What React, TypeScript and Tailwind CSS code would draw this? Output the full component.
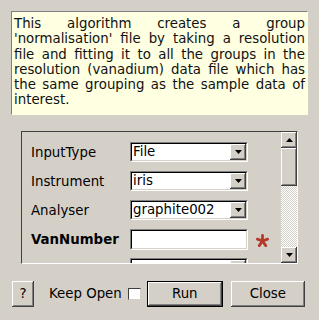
import React from 'react';

const raised =
  'bg-[#d4d0c8] shadow-[inset_-1px_-1px_#404040,inset_1px_1px_#ffffff,inset_-2px_-2px_#808080,inset_2px_2px_#d4d0c8]';

function Arrow({ up = false }: { up?: boolean }) {
  return (
    <svg width="7" height="4" viewBox="0 0 7 4" className="block">
      <polygon points={up ? '3.5,0 7,4 0,4' : '0,0 7,0 3.5,4'} fill="#000" />
    </svg>
  );
}

function Sunken({ children, className = '' }: { children?: React.ReactNode; className?: string }) {
  return (
    <div className={`border border-t-[#808080] border-l-[#808080] border-b-white border-r-white ${className}`}>
      <div className="h-full border border-t-black border-l-black border-b-[#d4d0c8] border-r-[#d4d0c8] bg-white flex items-center">
        {children}
      </div>
    </div>
  );
}

function Combo({ value }: { value: string }) {
  return (
    <Sunken className="w-[118px] h-[20px]">
      <span className="flex-1 pl-[1px] leading-none">{value}</span>
      <div className={`w-[16px] h-full flex items-center justify-center ${raised}`}>
        <Arrow />
      </div>
    </Sunken>
  );
}

function Star() {
  return (
    <svg width="13" height="13" viewBox="0 0 14 14" className="block">
      <g stroke="#b33a2a" strokeWidth="3" strokeLinecap="round">
        <line x1="7" y1="7.5" x2="7" y2="1.5" />
        <line x1="7" y1="7.5" x2="12.5" y2="5.5" />
        <line x1="7" y1="7.5" x2="10.5" y2="12.5" />
        <line x1="7" y1="7.5" x2="3.5" y2="12.5" />
        <line x1="7" y1="7.5" x2="1.5" y2="5.5" />
      </g>
    </svg>
  );
}

export default function App() {
  const rows = [
    { label: 'InputType', value: 'File' },
    { label: 'Instrument', value: 'iris' },
    { label: 'Analyser', value: 'graphite002' },
  ];

  return (
    <div
      className="w-[319px] h-[320px] bg-[#d4d0c8] flex flex-col text-[13.33px] text-black overflow-hidden"
      style={{ fontFamily: '"DejaVu Sans", sans-serif' }}
    >
      <div className="mx-[11px] mt-[11px] h-[104px] bg-[#ffffe1] border border-t-[#808080] border-l-[#808080] border-b-[#ffffe1] border-r-[#ffffe1] px-[2px] pt-[4px] leading-[15.3px] text-justify text-[#111]">
        This algorithm creates a group 'normalisation' file by taking a resolution file and fitting it to all
        the groups in the resolution (vanadium) data file which has the same grouping as the sample data of
        interest.
      </div>

      <div className="mt-[16px] ml-[21px] w-[277px] h-[133px] border border-t-[#404040] border-l-[#404040] border-b-white border-r-white flex overflow-hidden">
        <div className="flex-1 pl-[9px] pt-[10px] flex flex-col gap-[9px]">
          {rows.map((r) => (
            <div key={r.label} className="flex items-center h-[20px]">
              <span className="w-[99px] pt-[2px]">{r.label}</span>
              <Combo value={r.value} />
            </div>
          ))}
          <div className="flex items-center h-[20px]">
            <span className="w-[99px] pt-[2px] font-bold">VanNumber</span>
            <Sunken className="w-[118px] h-[21px]" />
            <span className="ml-[8px] pt-[2px]">
              <Star />
            </span>
          </div>
          <div className="flex items-center h-[20px] shrink-0">
            <span className="w-[99px]"></span>
            <Combo value="" />
          </div>
        </div>

        <div className="w-[16px] flex flex-col">
          <div className={`h-[16px] flex items-center justify-center ${raised}`}>
            <Arrow up />
          </div>
          <div className={`h-[38px] ${raised}`} />
          <div className="flex-1 bg-[repeating-conic-gradient(#d4d0c8_0%_25%,#ffffff_0%_50%)] bg-[length:2px_2px]" />
          <div className={`h-[16px] flex items-center justify-center ${raised}`}>
            <Arrow />
          </div>
        </div>
      </div>

      <div className="mt-[17px] pl-[12px] flex items-center h-[26px]">
        <button className={`w-[22px] h-[26px] ${raised}`}>?</button>
        <span className="ml-[15px]">Keep Open</span>
        <div className="ml-[6px] w-[13px] h-[12px] bg-white border border-t-[#404040] border-l-[#404040] border-b-[#d4d0c8] border-r-[#d4d0c8]" />
        <button className="ml-[6px] w-[76px] h-[26px] border border-black p-0">
          <div className={`w-full h-full flex items-center justify-center ${raised}`}>Run</div>
        </button>
        <button className={`ml-[8px] w-[74px] h-[26px] ${raised}`}>Close</button>
      </div>
    </div>
  );
}
